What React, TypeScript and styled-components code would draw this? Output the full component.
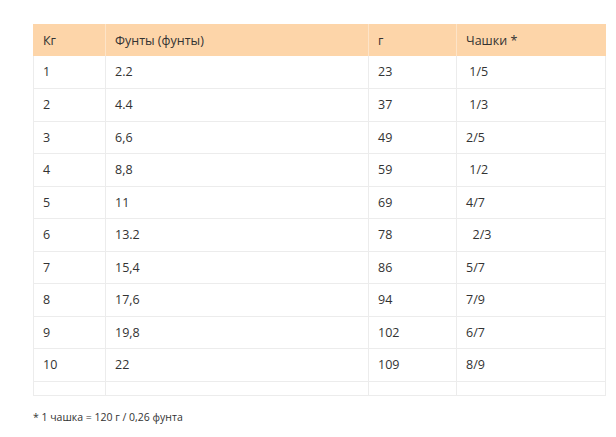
import React from "react";
import styled, { createGlobalStyle } from "styled-components";

const Global = createGlobalStyle`
  html, body { margin: 0; padding: 0; background: #fff; }
  body { font-family: "Open Sans", "Liberation Sans", sans-serif; color: #333; }
`;

const Page = styled.div`
  padding: 24px 11px 0 33px;
`;

const Table = styled.table`
  width: 572px;
  border-collapse: collapse;
  table-layout: fixed;
  font-size: 12.5px;
`;

const HeadCell = styled.th<{ $w: number }>`
  width: ${(p) => p.$w}px;
  height: 32px;
  padding: 0 0 0 9px;
  background: #fdd5a9;
  text-align: left;
  font-weight: 400;
  color: #333;
  border-left: 1px solid #fde4c8;
  &:first-child { border-left: 1px solid #fdd5a9; }
  box-sizing: border-box;
`;

const Row = styled.tr<{ $h: number }>`
  height: ${(p) => p.$h}px;
`;

const Cell = styled.td`
  padding: 0 0 0 9px;
  border: 1px solid #ececec;
  border-top: none;
  white-space: pre;
  color: #333;
  box-sizing: border-box;
`;

const Note = styled.p`
  margin: 14px 0 0;
  font-size: 10.5px;
  color: #333;
`;

const rows: [string, string, string, string][] = [
  ["1", "2.2", "23", " 1/5"],
  ["2", "4.4", "37", " 1/3"],
  ["3", "6,6", "49", "2/5"],
  ["4", "8,8", "59", " 1/2"],
  ["5", "11", "69", "4/7"],
  ["6", "13.2", "78", "  2/3"],
  ["7", "15,4", "86", "5/7"],
  ["8", "17,6", "94", "7/9"],
  ["9", "19,8", "102", "6/7"],
  ["10", "22", "109", "8/9"],
];

export default function App() {
  return (
    <>
      <Global />
      <Page>
        <Table>
          <thead>
            <tr>
              <HeadCell $w={72}>Кг</HeadCell>
              <HeadCell $w={263}>Фунты (фунты)</HeadCell>
              <HeadCell $w={88}>г</HeadCell>
              <HeadCell $w={149}>Чашки *</HeadCell>
            </tr>
          </thead>
          <tbody>
            {rows.map((r, i) => (
              <Row key={i} $h={i % 2 === 0 ? 32 : 33}>
                {r.map((c, j) => (
                  <Cell key={j}>{c}</Cell>
                ))}
              </Row>
            ))}
            <Row $h={14}>
              <Cell />
              <Cell />
              <Cell />
              <Cell />
            </Row>
          </tbody>
        </Table>
        <Note>* 1 чашка = 120 г / 0,26 фунта</Note>
      </Page>
    </>
  );
}
